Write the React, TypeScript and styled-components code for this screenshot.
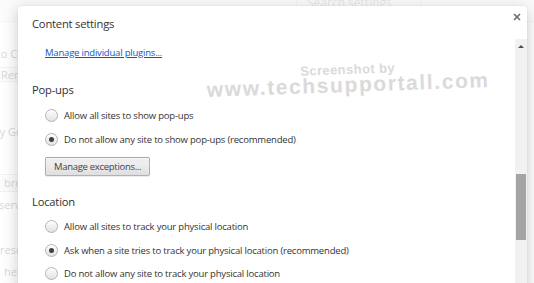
import React from 'react';
import styled, { createGlobalStyle } from 'styled-components';

const GlobalStyle = createGlobalStyle`
  html, body {
    margin: 0;
    padding: 0;
  }
  body {
    width: 534px;
    height: 283px;
    overflow: hidden;
    background: #fff;
    font-family: "Open Sans", "Noto Sans", sans-serif;
  }
`;

const Screen = styled.div`
  position: relative;
  width: 534px;
  height: 283px;
  overflow: hidden;
`;

/* ---- settings page behind the dialog ---- */

const Page = styled.div`
  display: flex;
  flex-direction: column;
  height: 100%;
  color: #333;
  font-size: 11px;
`;

const PageHeader = styled.header`
  flex-shrink: 0;
  height: 22px;
  box-sizing: border-box;
  display: flex;
  padding-left: 296px;
  background: linear-gradient(#e6e6e6, #f2f2f2);
  border-bottom: 1px solid #cfcfcf;
`;

const SearchBox = styled.div`
  width: 125px;
  height: 20px;
  box-sizing: border-box;
  border: 1px solid #bcbcbc;
  border-top: 0;
  padding: 0 10px;
  font-size: 12px;
  line-height: 6px;
  color: #888;
  white-space: nowrap;
  overflow: hidden;
`;

const BgLine = styled.div<{ $top: number; $shift: number }>`
  margin-top: ${(p) => p.$top}px;
  margin-left: ${(p) => p.$shift}px;
  line-height: 16px;
  white-space: nowrap;
`;

const BgBox = styled.div<{ $top: number; $shift: number; $h: number }>`
  margin-top: ${(p) => p.$top}px;
  margin-left: ${(p) => p.$shift}px;
  width: 160px;
  height: ${(p) => p.$h}px;
  line-height: ${(p) => p.$h - 2}px;
  box-sizing: border-box;
  border: 1px solid #c4c4c4;
  border-radius: 2px;
  padding-left: 12px;
  white-space: nowrap;
  background: linear-gradient(#f4f4f4, #e8e8e8);
`;

const Veil = styled.div`
  position: absolute;
  inset: 0;
  background: rgba(255, 255, 255, 0.8);
`;

/* ---- dialog ---- */

const Dialog = styled.section`
  position: absolute;
  top: 6px;
  left: 18px;
  width: 509px;
  height: 330px;
  display: flex;
  flex-direction: column;
  background: #fff;
  border-radius: 2px;
  box-shadow: 0 4px 16px rgba(0, 0, 0, 0.22), 0 0 1px rgba(0, 0, 0, 0.2);
`;

const DialogHeader = styled.div`
  flex-shrink: 0;
  height: 33px;
  box-sizing: border-box;
  display: flex;
  justify-content: space-between;
  align-items: flex-start;
  padding: 6px 5px 0 14px;
`;

const Title = styled.h1`
  margin: 3px 0 0;
  font-size: 11.2px;
  font-weight: 400;
  line-height: 18px;
  letter-spacing: -0.2px;
  color: #333;
`;

const CloseButton = styled.button`
  width: 10px;
  height: 10px;
  padding: 0;
  border: 0;
  background: none;
  display: flex;
  align-items: center;
  justify-content: center;
  cursor: pointer;
`;

const DialogBody = styled.div`
  flex: 1;
  display: flex;
  min-height: 0;
`;

const Content = styled.div`
  flex: 1;
  padding: 6px 0 0 14px;
  color: #333;
  font-size: 9.5px;
  letter-spacing: -0.2px;
`;

const Indent = styled.div`
  padding-left: 13px;
`;

const PluginLink = styled.a`
  display: inline-block;
  line-height: 16px;
  color: #15c;
  text-decoration: underline;
  cursor: pointer;
`;

const SectionTitle = styled.h3<{ $gap: number }>`
  margin: ${(p) => p.$gap}px 0 0;
  font-size: 11.2px;
  font-weight: 400;
  line-height: 18px;
  color: #303030;
`;

const RadioList = styled.div<{ $gap: number }>`
  display: flex;
  flex-direction: column;
  margin-top: ${(p) => p.$gap}px;
`;

const RadioRow = styled.label`
  display: flex;
  align-items: center;
  gap: 6px;
  height: 23.5px;
`;

const RadioDot = styled.span<{ $checked?: boolean }>`
  position: relative;
  flex-shrink: 0;
  width: 13px;
  height: 13px;
  box-sizing: border-box;
  border-radius: 50%;
  border: 1px solid #b3b3b3;
  background: linear-gradient(#fdfdfd, #e2e2e2);
  box-shadow: inset 0 1px 1px rgba(255, 255, 255, 0.9);

  &::after {
    content: '';
    display: ${(p) => (p.$checked ? 'block' : 'none')};
    position: absolute;
    top: 3px;
    left: 3px;
    width: 5px;
    height: 5px;
    border-radius: 50%;
    background: #404040;
  }
`;

const GreyButton = styled.button`
  margin-top: 6px;
  height: 19px;
  padding: 0 8px;
  font-family: inherit;
  font-size: 9.5px;
  letter-spacing: -0.3px;
  color: #444;
  border: 1px solid rgba(0, 0, 0, 0.25);
  border-radius: 2px;
  background: linear-gradient(#ededed, #ededed 38%, #dedede);
  box-shadow: 0 1px 0 rgba(0, 0, 0, 0.08), inset 0 1px 2px rgba(255, 255, 255, 0.75);
  cursor: pointer;
`;

const ScrollTrack = styled.div`
  flex-shrink: 0;
  width: 12px;
  display: flex;
  flex-direction: column;
  align-items: center;
  background: #f1f1f1;
`;

const ScrollArrow = styled.span`
  margin-top: 6px;
  width: 0;
  height: 0;
  border-left: 3px solid transparent;
  border-right: 3px solid transparent;
  border-bottom: 3px solid #505050;
`;

const ScrollThumb = styled.span`
  margin-top: 126px;
  width: 10px;
  height: 66px;
  background: #a4a4a4;
`;

/* ---- watermark over the dialog ---- */

const Watermark = styled.div`
  position: absolute;
  top: 62px;
  left: 198px;
  width: 300px;
  display: flex;
  flex-direction: column;
  align-items: center;
  font-family: "Liberation Sans", Arial, sans-serif;
  font-weight: 700;
  color: #dadada;
  transform: rotate(-2deg);
  pointer-events: none;
`;

const WatermarkSmall = styled.span`
  font-size: 13px;
  letter-spacing: 0.4px;
  line-height: 15px;
`;

const WatermarkBig = styled.span`
  margin-top: -3px;
  font-size: 21px;
  letter-spacing: 1.6px;
  line-height: 22px;
  white-space: nowrap;
`;

type RadioItem = { label: string; checked?: boolean };

const popups: RadioItem[] = [
  { label: 'Allow all sites to show pop-ups' },
  { label: 'Do not allow any site to show pop-ups (recommended)', checked: true },
];

const location: RadioItem[] = [
  { label: 'Allow all sites to track your physical location' },
  { label: 'Ask when a site tries to track your physical location (recommended)', checked: true },
  { label: 'Do not allow any site to track your physical location' },
];

const Radios = ({ items, gap }: { items: RadioItem[]; gap: number }) => (
  <RadioList $gap={gap}>
    {items.map((item) => (
      <RadioRow key={item.label}>
        <RadioDot $checked={item.checked} />
        <span>{item.label}</span>
      </RadioRow>
    ))}
  </RadioList>
);

export default function App() {
  return (
    <Screen>
      <GlobalStyle />
      <Page>
        <PageHeader>
          <SearchBox>Search settings</SearchBox>
        </PageHeader>
        <BgLine $top={24} $shift={-40}>Sign in to Chrome</BgLine>
        <BgBox $top={5} $shift={-12} $h={15}>Remove...</BgBox>
        <BgLine $top={42} $shift={-7}>by Google</BgLine>
        <BgBox $top={34} $shift={-9} $h={18}>browser</BgBox>
        <BgLine $top={5} $shift={-1}>services</BgLine>
        <BgLine $top={29} $shift={0}>resolve</BgLine>
        <BgLine $top={6} $shift={4}>help</BgLine>
      </Page>
      <Veil />

      <Dialog>
        <DialogHeader>
          <Title>Content settings</Title>
          <CloseButton aria-label="Close">
            <svg width="8" height="8" viewBox="0 0 8 8">
              <path d="M1 1L7 7M7 1L1 7" stroke="#6e6e6e" strokeWidth="1.7" />
            </svg>
          </CloseButton>
        </DialogHeader>
        <DialogBody>
          <Content>
            <Indent>
              <PluginLink>Manage individual plugins...</PluginLink>
            </Indent>

            <SectionTitle $gap={20}>Pop-ups</SectionTitle>
            <Indent>
              <Radios items={popups} gap={5} />
              <GreyButton>Manage exceptions...</GreyButton>
            </Indent>

            <SectionTitle $gap={17}>Location</SectionTitle>
            <Indent>
              <Radios items={location} gap={4} />
            </Indent>
          </Content>
          <ScrollTrack>
            <ScrollArrow />
            <ScrollThumb />
          </ScrollTrack>
        </DialogBody>
      </Dialog>

      <Watermark>
        <WatermarkSmall>Screenshot by</WatermarkSmall>
        <WatermarkBig>www.techsupportall.com</WatermarkBig>
      </Watermark>
    </Screen>
  );
}
